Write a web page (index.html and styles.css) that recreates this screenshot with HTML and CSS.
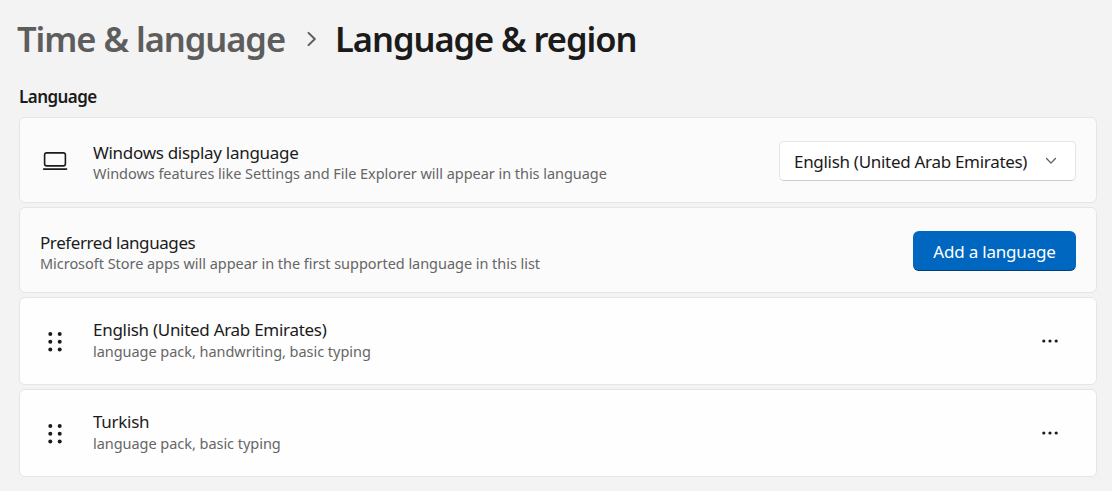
FILE: index.html
```html
<!DOCTYPE html>
<html lang="en">

<head>
  <meta charset="UTF-8" />
  <meta name="viewport" content="width=device-width, initial-scale=1.0">
  <title>Language &amp; region</title>
  <link rel="stylesheet" href="styles.css">
</head>

<body>
  <nav class="breadcrumb">
    <a href="#" class="crumb">Time &amp; language</a>
    <svg class="crumb-arrow" width="10" height="16" viewBox="0 0 10 16">
      <path d="M1.5 1.9 L7.8 8 L1.5 14.1" />
    </svg>
    <h1>Language &amp; region</h1>
  </nav>

  <main class="settings">
    <h2>Language</h2>

    <section class="card">
      <div class="card-icon">
        <svg class="laptop" width="26" height="20" viewBox="0 0 26 20">
          <rect x="2.6" y="1.9" width="20.8" height="13" rx="2.2" />
          <path d="M1.6 18.1 H24.6" />
        </svg>
      </div>
      <div class="card-text">
        <h3>Windows display language</h3>
        <p>Windows features like Settings and File Explorer will appear in this language</p>
      </div>
      <button type="button" class="select">
        <span>English (United Arab Emirates)</span>
        <svg width="12" height="8" viewBox="0 0 12 8">
          <path d="M1.6 1.5 L6 6.1 L10.4 1.5" />
        </svg>
      </button>
    </section>

    <section class="card">
      <div class="card-text">
        <h3 class="tight">Preferred languages</h3>
        <p>Microsoft Store apps will appear in the first supported language in this list</p>
      </div>
      <button type="button" class="add-btn">Add a language</button>
    </section>

    <section class="card language">
      <div class="card-icon">
        <svg class="dots" width="16" height="22" viewBox="0 0 16 22">
          <circle cx="3.3" cy="3" r="2" />
          <circle cx="12.7" cy="3" r="2" />
          <circle cx="3.3" cy="10.8" r="2" />
          <circle cx="12.7" cy="10.8" r="2" />
          <circle cx="3.3" cy="18.6" r="2" />
          <circle cx="12.7" cy="18.6" r="2" />
        </svg>
      </div>
      <div class="card-text">
        <h3>English (United Arab Emirates)</h3>
        <p>language pack, handwriting, basic typing</p>
      </div>
      <button type="button" class="more-btn" aria-label="More options">
        <svg class="dots" width="18" height="6" viewBox="0 0 18 6">
          <circle cx="2.8" cy="3" r="1.6" />
          <circle cx="9" cy="3" r="1.6" />
          <circle cx="15.2" cy="3" r="1.6" />
        </svg>
      </button>
    </section>

    <section class="card language">
      <div class="card-icon">
        <svg class="dots" width="16" height="22" viewBox="0 0 16 22">
          <circle cx="3.3" cy="3" r="2" />
          <circle cx="12.7" cy="3" r="2" />
          <circle cx="3.3" cy="10.8" r="2" />
          <circle cx="12.7" cy="10.8" r="2" />
          <circle cx="3.3" cy="18.6" r="2" />
          <circle cx="12.7" cy="18.6" r="2" />
        </svg>
      </div>
      <div class="card-text">
        <h3>Turkish</h3>
        <p>language pack, basic typing</p>
      </div>
      <button type="button" class="more-btn" aria-label="More options">
        <svg class="dots" width="18" height="6" viewBox="0 0 18 6">
          <circle cx="2.8" cy="3" r="1.6" />
          <circle cx="9" cy="3" r="1.6" />
          <circle cx="15.2" cy="3" r="1.6" />
        </svg>
      </button>
    </section>
  </main>
</body>

</html>
```
FILE: styles.css
```css
* {
  box-sizing: border-box;
  margin: 0;
  padding: 0;
}

body {
  font-family: 'Noto Sans', 'Open Sans', sans-serif;
  background: #f3f3f3;
  color: #1b1b1b;
  min-height: 100vh;
  overflow: hidden;
}

svg {
  display: block;
  fill: none;
  stroke: #5d5d5d;
  stroke-linecap: round;
  stroke-linejoin: round;
}

button {
  font-family: inherit;
  border: none;
  background: none;
  cursor: pointer;
}

.breadcrumb {
  display: flex;
  align-items: center;
  height: 78px;
  padding-left: 17px;
  white-space: nowrap;
}

.crumb,
.breadcrumb h1 {
  font-size: 34.5px;
  font-weight: 600;
  line-height: 48px;
  letter-spacing: -1.05px;
}

.crumb {
  width: 289px;
  color: #5d5d5d;
  text-decoration: none;
}

.crumb-arrow {
  stroke-width: 2;
  margin: 0 18px 0 1px;
}

.settings {
  display: flex;
  flex-direction: column;
  gap: 4px;
  padding: 7px 15px 0 19px;
}

.settings h2 {
  font-size: 17px;
  font-weight: 600;
  line-height: 24px;
  margin-bottom: 4px;
  letter-spacing: -0.55px;
}

.card {
  display: flex;
  align-items: center;
  height: 86px;
  padding: 2px 20px 0;
  background: #fbfbfb;
  border: 1px solid #e5e5e5;
  border-radius: 6px;
}

.card.language {
  height: 88px;
  padding-top: 0;
  background: #fefefe;
}

.card-icon {
  width: 53px;
  padding-left: 2px;
}

.language .card-icon {
  padding: 1px 0 0 7px;
}

.laptop {
  stroke: #1b1b1b;
  stroke-width: 1.6;
}

.card-text {
  flex: 1;
  white-space: nowrap;
  padding-top: 4px;
}

.card-text h3 {
  font-size: 17px;
  font-weight: 400;
  line-height: 21px;
  letter-spacing: -0.29px;
}

.card-text .tight {
  letter-spacing: -0.42px;
}

.card-text p {
  font-size: 14.5px;
  line-height: 21px;
  letter-spacing: -0.04px;
  color: #666;
}

.language .card-text {
  padding: 0 0 2px;
}

.language .card-text h3 {
  line-height: 22px;
}

.select {
  display: flex;
  align-items: center;
  justify-content: space-between;
  width: 297px;
  height: 40px;
  padding: 0 18px 0 14px;
  background: #fff;
  border: 1px solid #e5e5e5;
  border-bottom-color: #ccc;
  border-radius: 5px;
  color: #1b1b1b;
  font-size: 17px;
  letter-spacing: -0.3px;
  white-space: nowrap;
}

.select svg {
  stroke-width: 1.3;
}

.add-btn {
  width: 163px;
  height: 40px;
  padding-top: 2px;
  background: #0067c0;
  border-bottom: 1px solid #003e73;
  border-radius: 6px;
  color: #fff;
  font-size: 17px;
  letter-spacing: -0.2px;
}

.more-btn {
  padding: 10px 17px;
}

.dots {
  fill: #1b1b1b;
  stroke: none;
}
```
